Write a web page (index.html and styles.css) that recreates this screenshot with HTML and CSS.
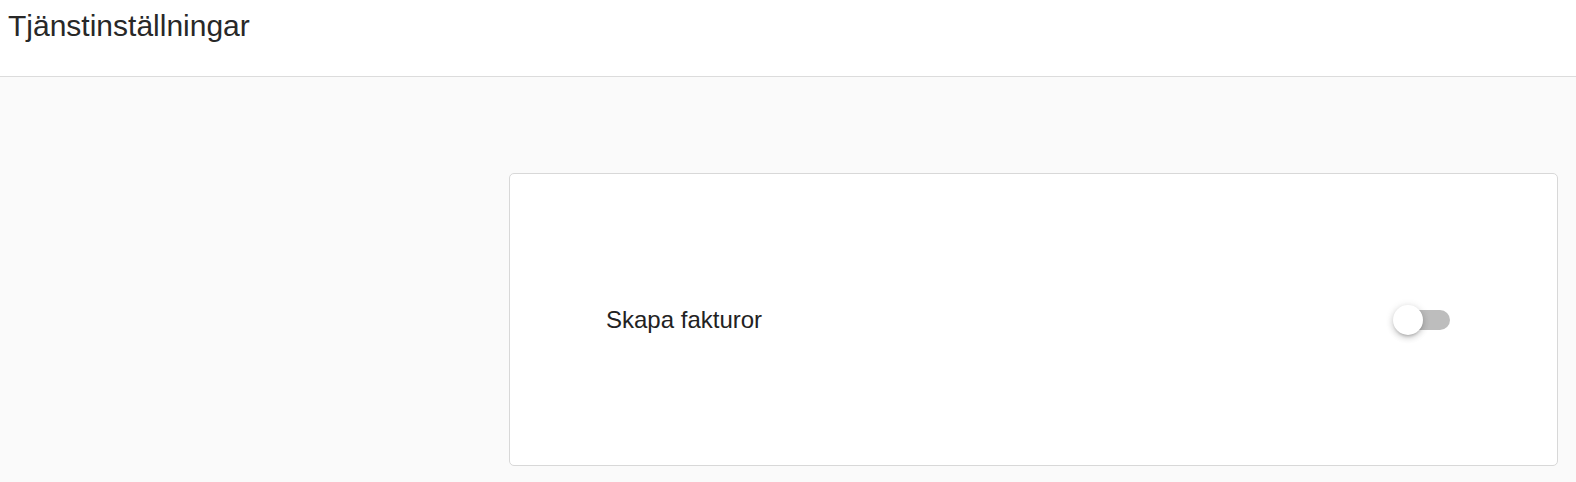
FILE: index.html
```html
<!DOCTYPE html>
<html lang="sv">
<head>
    <meta charset="UTF-8">
    <meta name="viewport" content="width=device-width, initial-scale=1.0">
    <title>Tjänstinställningar</title>
    <link rel="stylesheet" href="styles.css">
</head>
<body>
    <header class="topbar">
        <h1>Tjänstinställningar</h1>
    </header>

    <main class="content">
        <div class="spacer"></div>
        <section class="card">
            <div class="setting">
                <span class="setting-label">Skapa fakturor</span>
                <label class="toggle">
                    <input type="checkbox">
                    <span class="toggle-bar"></span>
                    <span class="toggle-thumb"></span>
                </label>
            </div>
        </section>
    </main>
</body>
</html>
```

FILE: styles.css
```css
html, body {
    margin: 0;
    padding: 0;
    height: 100%;
}
body {
    font-family: "Liberation Sans", Arial, sans-serif;
    background-color: #fafafa;
    color: #222;
}
.topbar {
    background-color: #fff;
    height: 77px;
    border-bottom: 1px solid #dcdcdc;
    box-sizing: border-box;
    padding: 8px 8px 0;
}
.topbar h1 {
    margin: 0;
    font-size: 30px;
    font-weight: normal;
    line-height: 36px;
    color: #282828;
}
.content {
    display: flex;
    padding: 96px 18px 0 18px;
}
.spacer {
    width: 491px;
    flex-shrink: 0;
}
.card {
    flex: 1;
    height: 293px;
    box-sizing: border-box;
    background-color: #fff;
    border: 1px solid #d8d8d8;
    border-radius: 5px;
    display: flex;
    align-items: center;
    padding: 0 107px 0 96px;
}
.setting {
    flex: 1;
    display: flex;
    align-items: center;
    justify-content: space-between;
}
.setting-label {
    font-size: 24px;
    color: #222;
}
.toggle {
    position: relative;
    width: 57px;
    height: 30px;
    cursor: pointer;
}
.toggle input {
    display: none;
}
.toggle-bar {
    position: absolute;
    left: 3px;
    right: 0;
    top: 5px;
    height: 20px;
    border-radius: 10px;
    background-color: #bdbdbd;
}
.toggle-thumb {
    position: absolute;
    left: 0;
    top: 0;
    width: 30px;
    height: 30px;
    border-radius: 50%;
    background-color: #fff;
    box-shadow: 0 3px 3px -2px rgba(0, 0, 0, 0.2), 0 3px 6px 0 rgba(0, 0, 0, 0.14), 0 1px 9px 0 rgba(0, 0, 0, 0.12);
}
```
